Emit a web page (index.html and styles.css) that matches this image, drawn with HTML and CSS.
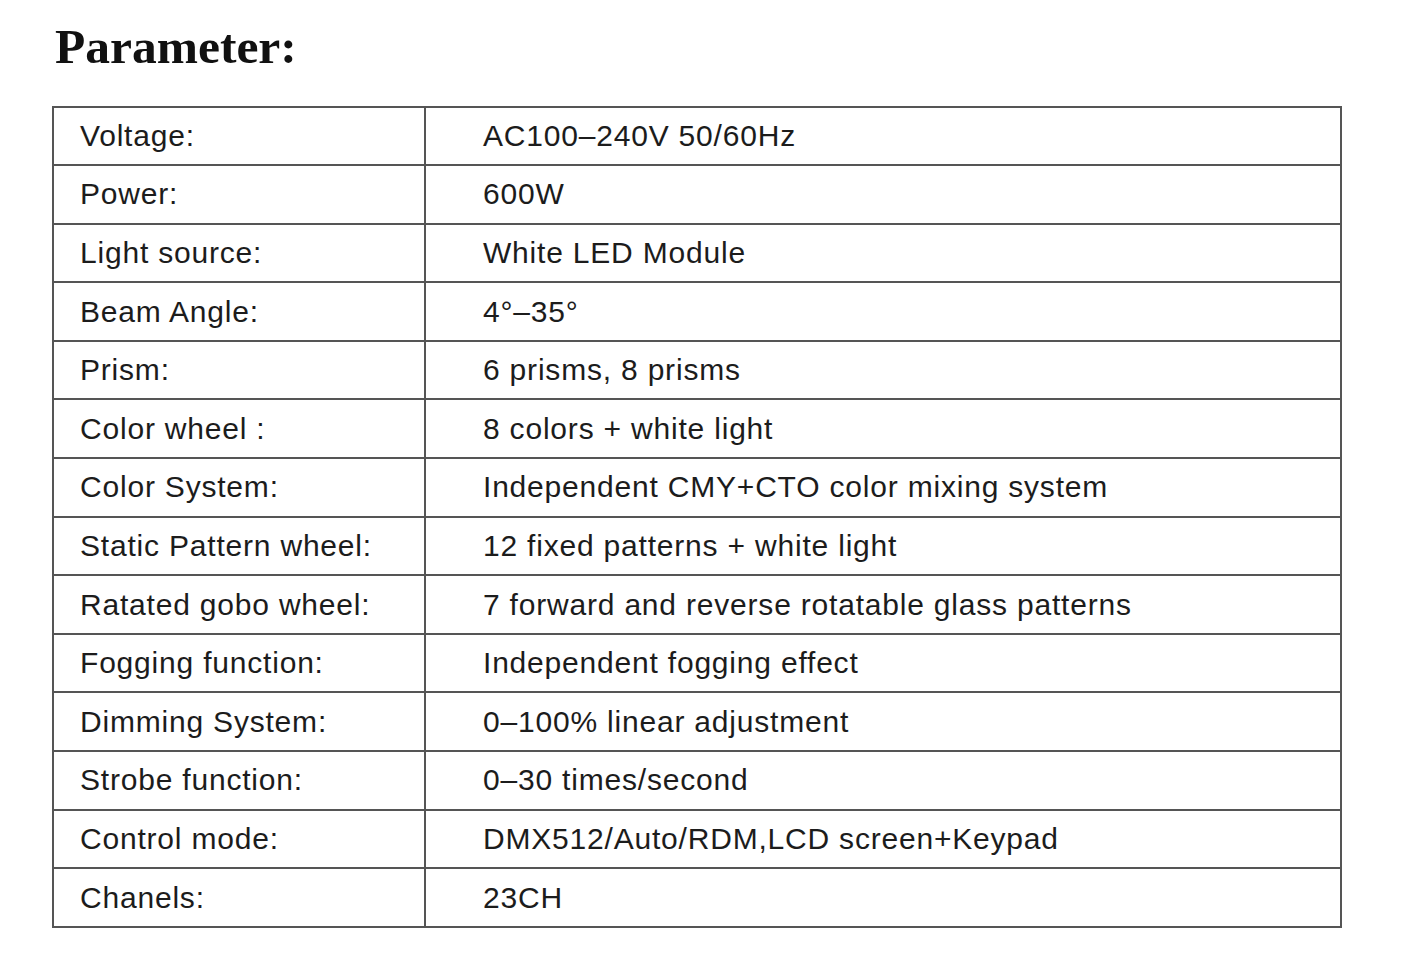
FILE: index.html
```html
<!DOCTYPE html>
<html lang="en">
<head>
<meta charset="utf-8">
<title>Parameter</title>
<link rel="stylesheet" href="styles.css">
</head>
<body>
<main class="page">
  <h1 class="title">Parameter:</h1>
  <table class="spec">
    <colgroup><col class="col-label"><col class="col-value"></colgroup>
    <tbody>
      <tr><td class="label">Voltage:</td><td class="value">AC100–240V 50/60Hz</td></tr>
      <tr><td class="label">Power:</td><td class="value">600W</td></tr>
      <tr><td class="label">Light source:</td><td class="value">White LED Module</td></tr>
      <tr><td class="label">Beam Angle:</td><td class="value">4°–35°</td></tr>
      <tr><td class="label">Prism:</td><td class="value">6 prisms, 8 prisms</td></tr>
      <tr><td class="label">Color wheel :</td><td class="value">8 colors + white light</td></tr>
      <tr><td class="label">Color System:</td><td class="value">Independent CMY+CTO color mixing system</td></tr>
      <tr><td class="label">Static Pattern wheel:</td><td class="value">12 fixed patterns + white light</td></tr>
      <tr><td class="label">Ratated gobo wheel:</td><td class="value">7 forward and reverse rotatable glass patterns</td></tr>
      <tr><td class="label">Fogging function:</td><td class="value">Independent fogging effect</td></tr>
      <tr><td class="label">Dimming System:</td><td class="value">0–100% linear adjustment</td></tr>
      <tr><td class="label">Strobe function:</td><td class="value">0–30 times/second</td></tr>
      <tr><td class="label">Control mode:</td><td class="value">DMX512/Auto/RDM,LCD screen+Keypad</td></tr>
      <tr><td class="label">Chanels:</td><td class="value">23CH</td></tr>
    </tbody>
  </table>
</main>
</body>
</html>
```
FILE: styles.css
```css
html, body {
  margin: 0;
  padding: 0;
  background: #ffffff;
}

.page {
  padding: 22px 0 0 55px;
}

.title {
  margin: 0 0 34px 0;
  font-family: "Liberation Serif", "Times New Roman", serif;
  font-weight: bold;
  font-size: 49.5px;
  line-height: 1;
  color: #111111;
}

.spec {
  margin-left: -3px;
  width: 1290px;
  border-collapse: collapse;
  font-family: "Liberation Sans", Arial, sans-serif;
  font-size: 30px;
  letter-spacing: 0.8px;
  color: #1c1c1c;
}

.col-label { width: 372px; }

.spec tr { height: 58.6px; }

.spec td {
  border: 2px solid #555555;
  padding: 0;
  vertical-align: middle;
  white-space: nowrap;
}

.label { padding-left: 26px !important; }
.value { padding-left: 57px !important; }
```
